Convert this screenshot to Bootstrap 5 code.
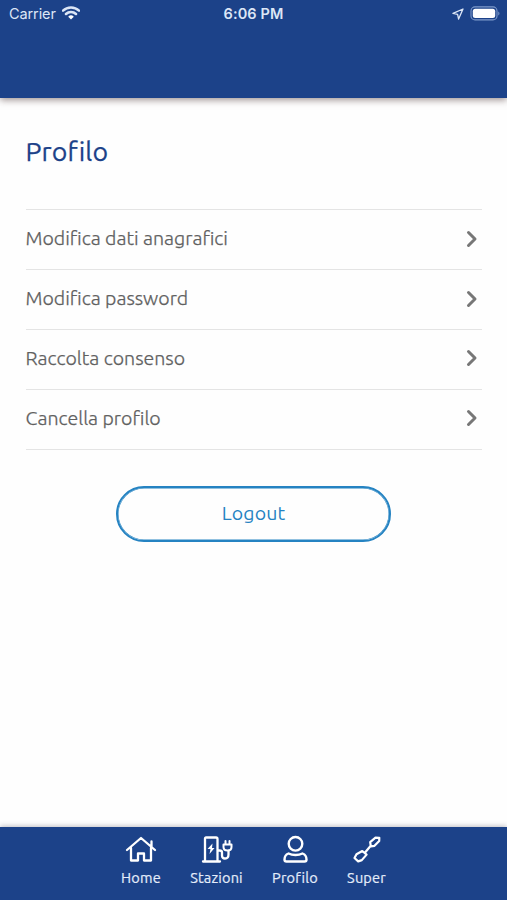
<!DOCTYPE html>
<html lang="it">
<head>
<meta charset="utf-8">
<meta name="viewport" content="width=device-width, initial-scale=1">
<title>Profilo</title>
<link href="https://cdn.jsdelivr.net/npm/bootstrap@5.3.0/dist/css/bootstrap.min.css" rel="stylesheet">
<style>
  :root { --brand: #1c4289; --accent: #2583c2; }
  body { font-family: Ubuntu, "Noto Sans", sans-serif; background: #fefefe; }
  svg { display: block; fill: none; stroke: currentColor; stroke-linecap: round; stroke-linejoin: round; }
  .app-header { height: 98px; background: var(--brand); box-shadow: 0 2px 7px rgba(60,35,35,.5); }
  .status { height: 28px; padding: 0 7px 0 9px; color: #dce6f6; font-family: Inter, sans-serif; line-height: 28px; }
  .status .side { flex: 1 1 0; }
  .carrier { letter-spacing: -.1px; font-size: 14.5px; }
  .wifi { margin-left: 6px; margin-top: -2px; }
  .battery { margin-left: 6px; margin-top: -1px; }
  .clock { font-size: 14.5px; font-weight: 600; letter-spacing: .12px; margin-left: -2px; }
  .content { padding: 35px 25px 0 26px; }
  .page-title { font-size: 26.700px; line-height: 36px; letter-spacing: .1px; color: var(--brand); margin-bottom: 40px; margin-left: -.5px; font-weight: 400; -webkit-text-stroke: .25px; }
  .menu { border-top: 1px solid #e4e4e4; }
  .menu .list-group-item, .menu .list-group-item:last-child { height: 59.9px; border-width: 0 0 1px; border-color: #e4e4e4; background: transparent; color: #606060; font-size: 19.6px; font-weight: 300; padding: 0 4px 1.500px 0; -webkit-text-stroke: .25px; }
  .menu span { margin-left: -.5px; }
  .menu svg { color: #777; }
  .btn-logout { width: 275px; height: 56px; border: 2px solid var(--accent); box-shadow: inset 0 0 0 .5px var(--accent); color: var(--accent); font-size: 19.5px; letter-spacing: .1px; margin-top: 36.500px; padding-bottom: 6px; margin-right: 1px; }
  .tabs { height: 73px; gap: 29px; padding-top: 8px; background: var(--brand); color: #fff; box-shadow: 0 -1px 5px rgba(40,40,60,.3); }
  .tabs a { color: inherit; font-size: 14.500px; letter-spacing: .18px; line-height: 20px; white-space: nowrap; }
  .tabs span { margin-top: 3px; color: #e4ecfa; -webkit-text-stroke: .2px; }
  .w-home { width: 40px; } .w-staz { width: 53px; } .w-prof { width: 46px; } .w-super { width: 39px; }
</style>
<script src="https://cdn.jsdelivr.net/npm/bootstrap@5.3.0/dist/js/bootstrap.bundle.min.js"></script>
</head>
<body class="d-flex flex-column vh-100 overflow-hidden">
<header class="app-header flex-shrink-0">
  <div class="status d-flex align-items-center">
    <div class="side d-flex align-items-center">
      <span class="carrier">Carrier</span>
      <svg class="wifi" width="18" height="14" viewBox="0 0 18 14" stroke="#fff" stroke-width="2.5" stroke-linecap="butt"><path d="M1 4.700a11.500 11.500 0 0 1 16 0M4 8a7.100 7.100 0 0 1 10 0"/><path d="M6.200 10.700a4 4 0 0 1 5.600 0L9 13.600z" fill="#fff" stroke="none"/></svg>
    </div>
    <span class="clock">6:06 PM</span>
    <div class="side d-flex align-items-center justify-content-end">
      <svg width="12" height="12" viewBox="0 0 12 12" stroke-width="1.300"><path d="M11 1 1 5.400l4.600 1L6.600 11z"/></svg>
      <svg class="battery" width="30" height="15" viewBox="0 0 30 15"><rect x="1" y=".9" width="26" height="13" rx="4" stroke="#7f9bcb" stroke-width="1.100"/><rect x="2.800" y="2.700" width="22.400" height="9.400" rx="2.500" fill="#fff" stroke="none"/><path d="M28.300 5.400c1.500.6 1.500 3.400 0 4z" fill="#7f9bcb" stroke="none"/></svg>
    </div>
  </div>
</header>

<main class="content flex-grow-1">
  <h1 class="page-title">Profilo</h1>
  <div class="list-group list-group-flush menu rounded-0">
    <a href="#" class="list-group-item d-flex align-items-center justify-content-between"><span>Modifica dati anagrafici</span><svg width="12" height="18" viewBox="0 0 12 18" stroke-width="3"><path d="M2.500 2.500 9 9l-6.500 6.500"/></svg></a>
    <a href="#" class="list-group-item d-flex align-items-center justify-content-between"><span>Modifica password</span><svg width="12" height="18" viewBox="0 0 12 18" stroke-width="3"><path d="M2.500 2.500 9 9l-6.500 6.500"/></svg></a>
    <a href="#" class="list-group-item d-flex align-items-center justify-content-between"><span>Raccolta consenso</span><svg width="12" height="18" viewBox="0 0 12 18" stroke-width="3"><path d="M2.500 2.500 9 9l-6.500 6.500"/></svg></a>
    <a href="#" class="list-group-item d-flex align-items-center justify-content-between"><span>Cancella profilo</span><svg width="12" height="18" viewBox="0 0 12 18" stroke-width="3"><path d="M2.500 2.500 9 9l-6.500 6.500"/></svg></a>
  </div>
  <div class="text-center"><button type="button" class="btn btn-logout rounded-pill">Logout</button></div>
</main>

<nav class="tabs d-flex justify-content-center flex-shrink-0">
  <a href="#" class="w-home d-flex flex-column align-items-center text-decoration-none">
    <svg width="32" height="30" viewBox="0 0 32 30" stroke-width="2.300"><path d="M2 15 16 3l14 12M6 13v12.500h7V18.500h6v7h7V13M26.500 12V6.500"/></svg>
    <span>Home</span></a>
  <a href="#" class="w-staz d-flex flex-column align-items-center text-decoration-none">
    <svg width="32" height="30" viewBox="0 0 32 30" stroke-width="2.300"><path d="M4 26V3.500Q4 2.500 5 2.500H15q1.500 0 1.500 1.500V26M2 26.500h17M17 15.500h1.500q2.500 0 2.500 2v3q0 3 3 3 3.500 0 3.500-4V16"/><path d="M22.500 9.500h8v2.500q0 3.500-4 3.500t-4-3.500zM24.500 9V6M28.500 9V6" stroke-width="2"/><path d="m11.500 8.500-5 5.500h3L8.500 19l5-6H11z" fill="currentColor" stroke="none"/></svg>
    <span>Stazioni</span></a>
  <a href="#" class="w-prof d-flex flex-column align-items-center text-decoration-none">
    <svg width="32" height="30" viewBox="0 0 32 30" stroke-width="2.400"><circle cx="16.500" cy="8.800" r="6.800"/><path d="M9.500 18.500Q5.500 20 5.500 24.500q0 2 2 2h18q2 0 2-2 0-4.500-4-6-3 1.500-7 1.500t-7-1.500z"/></svg>
    <span>Profilo</span></a>
  <a href="#" class="w-super d-flex flex-column align-items-center text-decoration-none">
    <svg width="32" height="30" viewBox="0 0 32 30" stroke-width="2.200"><path d="M19.200 7.200 24.500 2.700l3.800.1-.1 3.200-4.700 4.800-3.700.6zM19.500 11l-5 6M11.300 16l4.300 3.600-4.800 5.500-3.600 1.300-3.700-3.400 2-3.700z"/></svg>
    <span>Super</span></a>
</nav>
</body>
</html>
